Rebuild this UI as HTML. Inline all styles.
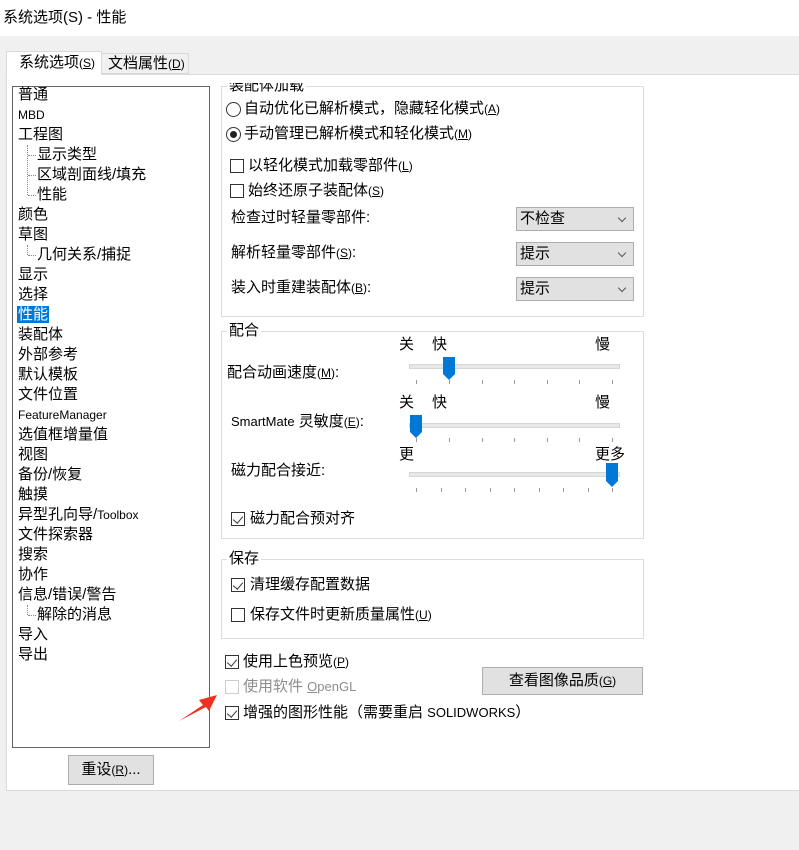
<!DOCTYPE html>
<html><head><meta charset="utf-8"><style>
*{margin:0;padding:0;box-sizing:border-box}
body{width:799px;height:850px;background:#f0f0f0;font-family:"Liberation Sans","Noto Sans CJK SC",sans-serif;font-size:15px;color:#000;position:relative;overflow:hidden}
.a{position:absolute;white-space:nowrap}
.t{line-height:20px}
.s{font-size:12px}
.grp{position:absolute;border:1px solid #dcdcdc}
.cb{position:absolute;width:14px;height:14px;border:1px solid #333;background:#fff}
.cb.on::after{content:"";position:absolute;left:3px;top:1px;width:5px;height:8px;border-right:1.3px solid #333;border-bottom:1.3px solid #333;transform:rotate(40deg)}
.rd{position:absolute;width:15px;height:15px;border:1px solid #333;border-radius:50%;background:#fff}
.sel{position:absolute;width:118px;height:24px;border:1px solid #adadad;background:#e1e1e1;padding-left:3px;line-height:22px}
.sel::after{content:"";position:absolute;right:8px;top:7px;width:5px;height:5px;border-right:1px solid #555;border-bottom:1px solid #555;transform:rotate(45deg)}
.btn{position:absolute;border:1px solid #adadad;background:#e1e1e1;text-align:center}
.track{position:absolute;left:409px;width:211px;height:5px;background:#e7e7e7;border:1px solid #d6d6d6}
.dot{position:absolute;border-left:1px dotted #888;}
</style></head><body>
<div class="a" style="left:0;top:0;width:799px;height:36px;background:#fff"></div>
<div class="a" style="left:3px;top:8px;line-height:20px">系统选项(S) - 性能</div>
<!-- tabs -->
<div class="a" style="left:6px;top:51px;width:96px;height:24px;background:#fff;border:1px solid #d9d9d9;border-bottom:none;z-index:2;padding-left:12px;line-height:22px">系统选项<span class="s">(<u>S</u>)</span></div>
<div class="a" style="left:101px;top:53px;width:88px;height:21px;background:#f0f0f0;border:1px solid #d9d9d9;padding-left:6px;line-height:20px">文档属性<span class="s">(<u>D</u>)</span></div>
<div class="a" style="left:6px;top:74px;width:800px;height:717px;background:#fff;border:1px solid #dadada"></div>
<!-- tree -->
<div class="a" style="left:12px;top:86px;width:198px;height:662px;border:1px solid #646464;background:#fff"></div>
<div class="a" style="left:18px;top:85px;line-height:20px">
<div>普通</div><div class="s">MBD</div><div>工程图</div>
<div style="padding-left:19px">显示类型</div><div style="padding-left:19px">区域剖面线/填充</div><div style="padding-left:19px">性能</div>
<div>颜色</div><div>草图</div><div style="padding-left:19px">几何关系/捕捉</div>
<div>显示</div><div>选择</div><div><span style="background:#0078d7;color:#fff;padding:0 1px;margin-left:-1px">性能</span></div>
<div>装配体</div><div>外部参考</div><div>默认模板</div><div>文件位置</div><div class="s">FeatureManager</div><div>选值框增量值</div><div>视图</div><div>备份/恢复</div><div>触摸</div><div>异型孔向导/<span class="s">Toolbox</span></div><div>文件探索器</div><div>搜索</div><div>协作</div><div>信息/错误/警告</div><div style="padding-left:19px">解除的消息</div><div>导入</div><div>导出</div>
</div>
<div class="dot" style="left:27px;top:145px;height:50px"></div>
<div class="dot" style="left:27px;top:245px;height:10px"></div>
<div class="dot" style="left:27px;top:605px;height:10px"></div>
<div class="a" style="left:28px;top:155px;width:8px;border-top:1px dotted #888"></div>
<div class="a" style="left:28px;top:175px;width:8px;border-top:1px dotted #888"></div>
<div class="a" style="left:28px;top:195px;width:8px;border-top:1px dotted #888"></div>
<div class="a" style="left:28px;top:255px;width:8px;border-top:1px dotted #888"></div>
<div class="a" style="left:28px;top:615px;width:8px;border-top:1px dotted #888"></div>
<div class="btn" style="left:68px;top:755px;width:86px;height:30px;line-height:28px">重设<span class="s">(<u>R</u>)</span>...</div>
<!-- group1 clipped -->
<div class="a" style="left:215px;top:83px;width:440px;height:240px;overflow:hidden">
<div class="grp" style="left:6px;top:3px;width:423px;height:231px"></div>
<div class="a" style="left:12px;top:-7px;background:#fff;padding:0 2px;line-height:20px">装配体加载</div>
</div>
<div class="rd" style="left:226px;top:102px"></div>
<div class="a t" style="left:244px;top:99px">自动优化已解析模式，隐藏轻化模式<span class="s">(<u>A</u>)</span></div>
<div class="rd" style="left:226px;top:127px"></div><div class="a" style="left:230px;top:131px;width:7px;height:7px;border-radius:50%;background:#222"></div>
<div class="a t" style="left:244px;top:124px">手动管理已解析模式和轻化模式<span class="s">(<u>M</u>)</span></div>
<div class="cb" style="left:230px;top:159px"></div><div class="a t" style="left:248px;top:156px">以轻化模式加载零部件<span class="s">(<u>L</u>)</span></div>
<div class="cb" style="left:230px;top:184px"></div><div class="a t" style="left:248px;top:181px">始终还原子装配体<span class="s">(<u>S</u>)</span></div>
<div class="a t" style="left:231px;top:208px">检查过时轻量零部件:</div>
<div class="a t" style="left:231px;top:243px">解析轻量零部件<span class="s">(<u>S</u>)</span>:</div>
<div class="a t" style="left:231px;top:278px">装入时重建装配体<span class="s">(<u>B</u>)</span>:</div>
<div class="sel" style="left:516px;top:207px">不检查</div>
<div class="sel" style="left:516px;top:242px">提示</div>
<div class="sel" style="left:516px;top:277px">提示</div>
<!-- group2 -->
<div class="grp" style="left:221px;top:331px;width:423px;height:208px"></div>
<div class="a t" style="left:227px;top:321px;background:#fff;padding:0 2px">配合</div>
<div class="a t" style="left:399px;top:335px">关</div><div class="a t" style="left:432px;top:335px">快</div><div class="a t" style="left:595px;top:335px">慢</div>
<div class="a t" style="left:227px;top:363px">配合动画速度<span class="s">(<u>M</u>)</span>:</div>
<div class="track" style="top:364px"></div>
<div class="a t" style="left:399px;top:393px">关</div><div class="a t" style="left:432px;top:393px">快</div><div class="a t" style="left:595px;top:393px">慢</div>
<div class="a t" style="left:231px;top:412px"><span class="s" style="font-size:13px">SmartMate</span> 灵敏度<span class="s">(<u>E</u>)</span>:</div>
<div class="track" style="top:423px"></div>
<div class="a t" style="left:399px;top:445px">更</div><div class="a t" style="left:595px;top:445px">更多</div>
<div class="a t" style="left:231px;top:461px">磁力配合接近:</div>
<div class="track" style="top:472px"></div>
<svg class="a" style="left:0;top:0" width="799" height="850">
<g fill="#999">
<rect x="416" y="380" width="1" height="4"/><rect x="449" y="380" width="1" height="4"/><rect x="482" y="380" width="1" height="4"/><rect x="514" y="380" width="1" height="4"/><rect x="547" y="380" width="1" height="4"/><rect x="579" y="380" width="1" height="4"/><rect x="612" y="380" width="1" height="4"/>
<rect x="416" y="438" width="1" height="4"/><rect x="449" y="438" width="1" height="4"/><rect x="482" y="438" width="1" height="4"/><rect x="514" y="438" width="1" height="4"/><rect x="547" y="438" width="1" height="4"/><rect x="579" y="438" width="1" height="4"/><rect x="612" y="438" width="1" height="4"/>
<rect x="416" y="488" width="1" height="4"/><rect x="441" y="488" width="1" height="4"/><rect x="465" y="488" width="1" height="4"/><rect x="490" y="488" width="1" height="4"/><rect x="514" y="488" width="1" height="4"/><rect x="539" y="488" width="1" height="4"/><rect x="563" y="488" width="1" height="4"/><rect x="588" y="488" width="1" height="4"/><rect x="612" y="488" width="1" height="4"/>
</g>
<g fill="#0078d7">
<path d="M443 357h12v17l-6 6l-6-6z"/>
<path d="M410 415h12v17l-6 6l-6-6z"/>
<path d="M606 463h12v18l-6 6l-6-6z"/>
</g>
<path d="M179 721 L203 705 L199 700 L217 695 L209 711 L206 707 Z" fill="#f03020"/>
</svg>
<div class="cb on" style="left:231px;top:512px"></div><div class="a t" style="left:250px;top:509px">磁力配合预对齐</div>
<!-- group3 -->
<div class="grp" style="left:221px;top:559px;width:423px;height:80px"></div>
<div class="a t" style="left:227px;top:549px;background:#fff;padding:0 2px">保存</div>
<div class="cb on" style="left:231px;top:578px"></div><div class="a t" style="left:250px;top:575px">清理缓存配置数据</div>
<div class="cb" style="left:231px;top:608px"></div><div class="a t" style="left:250px;top:605px">保存文件时更新质量属性<span class="s">(<u>U</u>)</span></div>
<div class="cb on" style="left:225px;top:655px"></div><div class="a t" style="left:243px;top:652px">使用上色预览<span class="s">(<u>P</u>)</span></div>
<div class="cb" style="left:225px;top:680px;border-color:#ccc"></div><div class="a t" style="left:243px;top:677px;color:#8d8d8d">使用软件 <span class="s" style="font-size:13px"><u>O</u>penGL</span></div>
<div class="cb on" style="left:225px;top:706px"></div><div class="a t" style="left:243px;top:703px">增强的图形性能（需要重启 <span class="s" style="font-size:13px">SOLIDWORKS</span>）</div>
<div class="btn" style="left:482px;top:667px;width:161px;height:28px;line-height:26px">查看图像品质<span class="s">(<u>G</u>)</span></div>
</body></html>
